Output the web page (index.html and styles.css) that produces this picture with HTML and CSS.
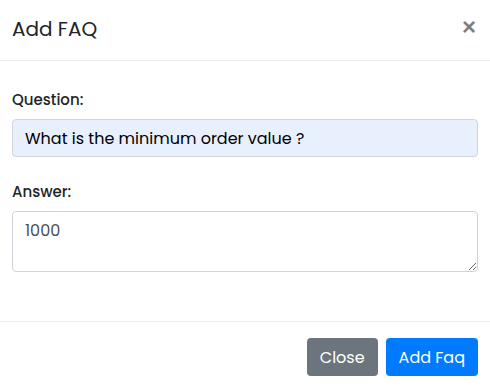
FILE: index.html
```html
<!DOCTYPE html>
<html lang="en">
  <head>
    <meta charset="UTF-8" />
    <meta name="viewport" content="width=device-width, initial-scale=1.0" />
    <title>Add FAQ</title>
    <link rel="stylesheet" href="styles.css">
  </head>
  <body>
    <div class="modal">
      <header class="modal-header">
        <h5>Add FAQ</h5>
        <button class="close" type="button" aria-label="Close">&times;</button>
      </header>

      <form class="modal-body">
        <div class="form-group">
          <label for="question">Question:</label>
          <input id="question" class="autofill" value="What is the minimum order value ?" />
        </div>
        <div class="form-group">
          <label for="answer">Answer:</label>
          <textarea id="answer">1000</textarea>
        </div>
      </form>

      <footer class="modal-footer">
        <button class="btn btn-secondary" type="button">Close</button>
        <button class="btn btn-primary" type="button">Add Faq</button>
      </footer>
    </div>
  </body>
</html>
```

FILE: styles.css
```css
* {
  box-sizing: border-box;
}

body {
  margin: 0;
  font-family: "Poppins", "Open Sans", sans-serif;
  color: #212529;
  background: #fff;
}

.modal {
  display: flex;
  flex-direction: column;
  width: 490px;
  height: 389px;
}

.modal-header {
  display: flex;
  align-items: center;
  justify-content: space-between;
  height: 61px;
  padding: 0 12px;
  border-bottom: 1px solid #e9ecef;

  h5 {
    margin: 0;
    font-size: 20px;
    font-weight: 400;
    line-height: 1.5;
    padding-bottom: 2px;
  }

  .close {
    border: 0;
    background: none;
    padding: 0 2px 6px;
    font-family: "Liberation Sans", sans-serif;
    font-size: 24px;
    font-weight: 700;
    line-height: 1;
    color: #000;
    opacity: 0.5;
    cursor: pointer;
  }
}

.modal-body {
  flex-grow: 1;
  padding: 28px 12px 0;
}

.form-group {
  display: flex;
  flex-direction: column;
  margin-bottom: 24px;

  label {
    font-size: 15px;
    font-weight: 500;
    line-height: 22px;
    margin-bottom: 8px;
  }

  input,
  textarea {
    font: inherit;
    font-size: 16px;
    color: #495057;
    border: 1px solid #ced4da;
    border-radius: 4px;
    padding: 6px 12px;
    background: #fff;
  }

  input {
    height: 38px;
  }

  input.autofill {
    background: #e8f0fe;
    color: #000;
  }

  textarea {
    height: 61px;
    resize: vertical;
  }
}

.modal-footer {
  display: flex;
  justify-content: flex-end;
  gap: 8px;
  height: 68px;
  padding: 16px 12px 0;
  border-top: 1px solid #e9ecef;
}

.btn {
  height: 38px;
  border: 0;
  border-radius: 4px;
  padding: 0 13px;
  font: inherit;
  font-size: 16px;
  color: #fff;
  cursor: pointer;
}

.btn-secondary {
  background: #6c757d;
}

.btn-primary {
  background: #007bff;
}
```
